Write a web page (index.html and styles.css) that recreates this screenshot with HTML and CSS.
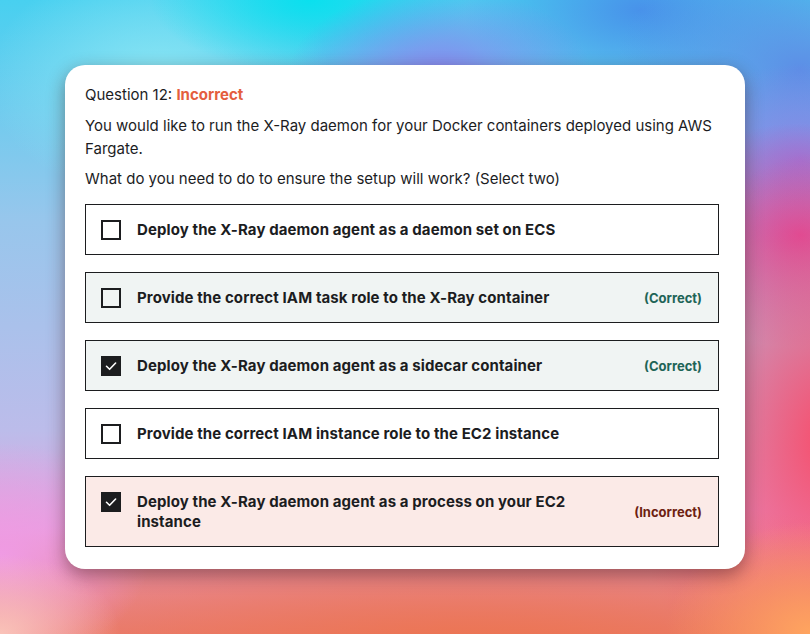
FILE: index.html
```html
<!DOCTYPE html>
<html>
<head>
<meta charset="utf-8">
<link rel="stylesheet" href="styles.css">
</head>
<body>
<div class="stage">
  <div class="card">
    <div class="qhead">Question 12: <span class="bad">Incorrect</span></div>
    <p class="prompt">You would like to run the X-Ray daemon for your Docker containers deployed using AWS Fargate.</p>
    <p class="prompt ask">What do you need to do to ensure the setup will work? (Select two)</p>
    <div class="options">
      <div class="opt">
        <span class="box"></span>
        <span class="txt">Deploy the X-Ray daemon agent as a daemon set on ECS</span>
      </div>
      <div class="opt ok">
        <span class="box"></span>
        <span class="txt">Provide the correct IAM task role to the X-Ray container</span>
        <span class="tag">(Correct)</span>
      </div>
      <div class="opt ok">
        <span class="box on"><svg viewBox="0 0 20 20" width="20" height="20"><path d="M5.5 10.3 L8.6 13.3 L14.6 7" fill="none" stroke="#fff" stroke-width="1.6" stroke-linecap="round" stroke-linejoin="round"/></svg></span>
        <span class="txt">Deploy the X-Ray daemon agent as a sidecar container</span>
        <span class="tag">(Correct)</span>
      </div>
      <div class="opt">
        <span class="box"></span>
        <span class="txt">Provide the correct IAM instance role to the EC2 instance</span>
      </div>
      <div class="opt wrong">
        <span class="box on"><svg viewBox="0 0 20 20" width="20" height="20"><path d="M5.5 10.3 L8.6 13.3 L14.6 7" fill="none" stroke="#fff" stroke-width="1.6" stroke-linecap="round" stroke-linejoin="round"/></svg></span>
        <span class="txt">Deploy the X-Ray daemon agent as a process on your EC2 instance</span>
        <span class="tag">(Incorrect)</span>
      </div>
    </div>
  </div>
</div>
</body>
</html>
```

FILE: styles.css
```css
html, body {
  margin: 0;
  padding: 0;
}
body {
  width: 810px;
  height: 634px;
  overflow: hidden;
  font-family: "Inter", "Roboto", sans-serif;
  color: #1c1d1f;
}
.stage {
  width: 810px;
  height: 634px;
  box-sizing: border-box;
  padding: 65px 65px 0 65px;
  background:
    radial-gradient(ellipse 150px 100px at 0px 634px, rgba(250,195,185,1), rgba(250,195,185,0) 80%),
    radial-gradient(ellipse 180px 140px at 810px 634px, rgba(255,165,95,1), rgba(255,165,95,0) 80%),
    radial-gradient(ellipse 200px 150px at 0px 555px, rgba(240,155,228,1), rgba(240,155,228,0) 75%),
    radial-gradient(ellipse 760px 160px at 470px 650px, rgba(236,116,80,1), rgba(236,116,80,0) 95%),
    radial-gradient(ellipse 240px 340px at 830px 440px, rgba(248,76,106,1), rgba(248,76,106,0) 85%),
    radial-gradient(ellipse 190px 140px at 800px 235px, rgba(216,74,160,1), rgba(216,74,160,0) 80%),
    radial-gradient(ellipse 160px 120px at 800px 160px, rgba(140,130,228,1), rgba(140,130,228,0) 80%),
    radial-gradient(ellipse 230px 170px at 800px 70px, rgba(92,142,230,1), rgba(92,142,230,0) 80%),
    radial-gradient(ellipse 190px 110px at 440px 75px, rgba(136,134,238,1), rgba(136,134,238,0) 80%),
    radial-gradient(ellipse 220px 120px at 640px 10px, rgba(72,146,234,1), rgba(72,146,234,0) 80%),
    radial-gradient(ellipse 200px 90px at 310px 0px, rgba(10,224,238,1), rgba(10,224,238,0) 80%),
    radial-gradient(ellipse 230px 160px at 160px 80px, rgba(138,230,244,1), rgba(138,230,244,0) 75%),
    linear-gradient(180deg, #48d0f0 0%, #98c6ec 35%, #bcbcea 68%, #e4a0dc 84%, #e88080 100%);
}
.card {
  background: #fff;
  border-radius: 20px;
  height: 504px;
  box-sizing: border-box;
  padding: 20px 26px 22px 20px;
  box-shadow: 0 6px 18px rgba(60, 20, 20, 0.45);
}
.qhead {
  font-size: 15px;
  line-height: 20px;
  margin-bottom: 9px;
}
.bad {
  color: #e45e3e;
  font-weight: 700;
}
.prompt {
  margin: 0 0 7px 0;
  font-size: 15px;
  line-height: 23px;
}
.ask {
  margin-bottom: 14px;
}
.options {
  display: flex;
  flex-direction: column;
  gap: 17px;
}
.opt {
  display: flex;
  align-items: flex-start;
  border: 1px solid #1c1d1f;
  padding: 15px 16px 14px 15px;
  background: #fff;
}
.opt.ok {
  background: #f0f4f3;
}
.opt.wrong {
  background: #fbeae7;
}
.box {
  flex: none;
  width: 20px;
  height: 20px;
  box-sizing: border-box;
  border: 2px solid #1c1d1f;
  margin-right: 16px;
  display: flex;
}
.box.on {
  background: #1c1d1f;
  border: none;
}
.txt {
  flex: 1;
  font-size: 15px;
  line-height: 20px;
  font-weight: 700;
  letter-spacing: 0.1px;
  padding-right: 60px;
}
.tag {
  flex: none;
  align-self: center;
  font-size: 13px;
  font-weight: 700;
  color: #1e6457;
}
.wrong .tag {
  color: #6e1f12;
}
```
